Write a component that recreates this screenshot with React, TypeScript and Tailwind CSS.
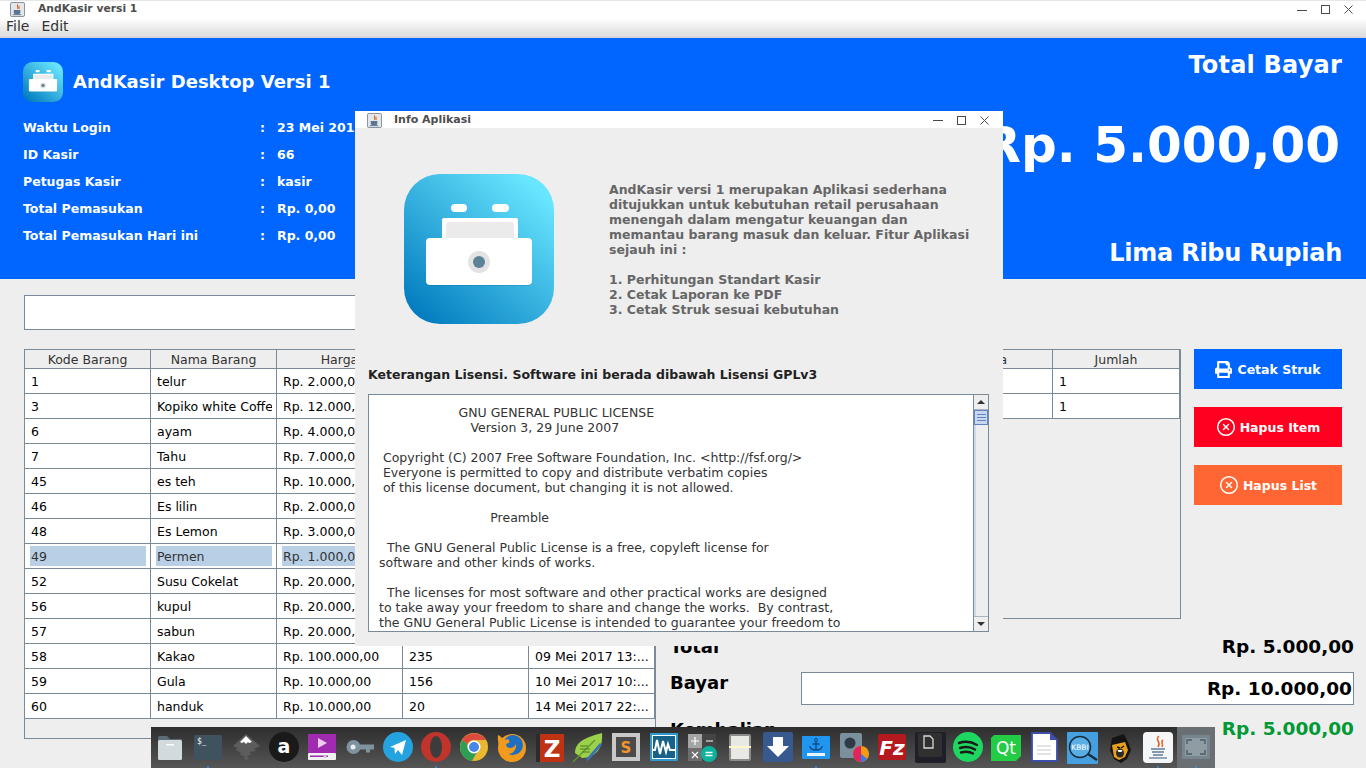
import { CircleX } from "lucide-react";
import { FaPrint } from "react-icons/fa";

const INFO_ROWS = [
  ["Waktu Login", "23 Mei 2017"],
  ["ID Kasir", "66"],
  ["Petugas Kasir", "kasir"],
  ["Total Pemasukan", "Rp. 0,00"],
  ["Total Pemasukan Hari ini", "Rp. 0,00"],
];

const BARANG = [
  ["1", "telur", "Rp. 2.000,00", "", ""],
  ["3", "Kopiko white Coffe", "Rp. 12.000,00", "", ""],
  ["6", "ayam", "Rp. 4.000,00", "", ""],
  ["7", "Tahu", "Rp. 7.000,00", "", ""],
  ["45", "es teh", "Rp. 10.000,00", "", ""],
  ["46", "Es lilin", "Rp. 2.000,00", "", ""],
  ["48", "Es Lemon", "Rp. 3.000,00", "", ""],
  ["49", "Permen", "Rp. 1.000,00", "", ""],
  ["52", "Susu Cokelat", "Rp. 20.000,00", "", ""],
  ["56", "kupul", "Rp. 20.000,00", "", ""],
  ["57", "sabun", "Rp. 20.000,00", "", ""],
  ["58", "Kakao", "Rp. 100.000,00", "235", "09 Mei 2017 13:..."],
  ["59", "Gula", "Rp. 10.000,00", "156", "10 Mei 2017 10:..."],
  ["60", "handuk", "Rp. 10.000,00", "20", "14 Mei 2017 22:..."],
];

const LICENSE = `                    GNU GENERAL PUBLIC LICENSE
                       Version 3, 29 June 2007

 Copyright (C) 2007 Free Software Foundation, Inc. <http://fsf.org/>
 Everyone is permitted to copy and distribute verbatim copies
 of this license document, but changing it is not allowed.

                            Preamble

  The GNU General Public License is a free, copyleft license for
software and other kinds of works.

  The licenses for most software and other practical works are designed
to take away your freedom to share and change the works.  By contrast,
the GNU General Public License is intended to guarantee your freedom to`;

const ABOUT = `AndKasir versi 1 merupakan Aplikasi sederhana
ditujukkan untuk kebutuhan retail perusahaan
menengah dalam mengatur keuangan dan
memantau barang masuk dan keluar. Fitur Aplikasi
sejauh ini :

1. Perhitungan Standart Kasir
2. Cetak Laporan ke PDF
3. Cetak Struk sesuai kebutuhan`;

function AppLogo({ id, className }: { id: string; className: string }) {
  return (
    <svg viewBox="0 0 150 150" className={className}>
      <defs>
        <linearGradient id={id} x1="0.1" y1="1" x2="0.9" y2="0.1">
          <stop offset="0" stopColor="#0079bd" />
          <stop offset="1" stopColor="#69e6ff" />
        </linearGradient>
      </defs>
      <rect width="150" height="150" rx="36" fill={`url(#${id})`} />
      <rect x="47" y="30" width="16" height="8" rx="4" fill="#fff" />
      <rect x="88" y="30" width="17" height="8" rx="4" fill="#fff" />
      <rect x="38" y="44" width="76" height="24" rx="2" fill="#fff" />
      <rect x="42" y="48" width="68" height="18" rx="2" fill="#ebebeb" />
      <rect x="22" y="65" width="106" height="47" rx="4" fill="#0a5c86" opacity="0.25" />
      <rect x="22" y="64" width="106" height="47" rx="4" fill="#fff" />
      <circle cx="75" cy="88" r="11" fill="#e3e3e3" />
      <circle cx="75" cy="88" r="6" fill="#5b8296" />
    </svg>
  );
}

function JavaIcon() {
  return (
    <svg viewBox="0 0 16 16" className="h-[15px] w-[15px]">
      <rect x="0.5" y="0.5" width="15" height="15" rx="1.5" fill="#e4e7ea" stroke="#7d8b99" />
      <path d="M8.5 2.5c-2 2 1 3-.5 5M10 4c-1.500 1.500.5 2-.5 3.500" stroke="#d9642b" strokeWidth="1.100" fill="none" />
      <path d="M4 8.500h7v2.500a2 2 0 0 1-2 2H6a2 2 0 0 1-2-2z" fill="#5a7490" />
      <path d="M3 13.500h9" stroke="#5a7490" />
    </svg>
  );
}

function WindowButtons({ gap }: { gap: string }) {
  return (
    <div className={`flex items-center ${gap}`}>
      <svg viewBox="0 0 10 10" className="h-[10px] w-[10px]">
        <path d="M0 5.500h10" stroke="#4a4a4a" />
      </svg>
      <svg viewBox="0 0 9 9" className="h-[9px] w-[9px]">
        <rect x="0.5" y="0.500" width="8" height="8" fill="none" stroke="#4a4a4a" />
      </svg>
      <svg viewBox="0 0 9 9" className="h-[9px] w-[9px]">
        <path d="M0.500 0.500l8 8M8.500 0.500l-8 8" stroke="#4a4a4a" />
      </svg>
    </div>
  );
}

function Cell({ text, selected }: { text: string; selected?: boolean }) {
  return (
    <div className="h-[25px] border-r border-b border-[#7a8a99] bg-white pt-[2px] pr-[4px] pb-[2px] pl-[5px]">
      <div className={`flex h-full items-center overflow-hidden px-[1px] pt-[2px] whitespace-nowrap ${selected ? "bg-[#b8cfe5] text-[#333333]" : "text-black"}`}>
        {text}
      </div>
    </div>
  );
}

function HeaderCell({ text }: { text: string }) {
  return (
    <div className="flex h-[19px] items-center justify-center overflow-hidden border-r border-b border-[#7a8a99] bg-[#eeeeee] pt-[2px] whitespace-nowrap text-[#333333]">
      {text}
    </div>
  );
}

function SideButton({ color, icon, label }: { color: string; icon: React.ReactNode; label: string }) {
  return (
    <div className={`flex h-10 items-center justify-center gap-[4px] text-[12.5px] font-bold text-white ${color}`}>
      {icon}
      <span className="pt-[2px]">{label}</span>
    </div>
  );
}

const DOCK_ICONS = [
  <g key="folder">
    <path d="M3 6a2 2 0 0 1 2-2h7l3 3h11a1 1 0 0 1 1 1v4H3z" fill="#5a6c78" />
    <rect x="3" y="8" width="24" height="20" rx="1.500" fill="#d3dade" />
    <rect x="11" y="12" width="8" height="1.500" fill="#fff" />
  </g>,
  <g key="terminal">
    <rect x="1" y="3" width="28" height="25" rx="2" fill="#3f525e" />
    <text x="4" y="12" fontSize="8" fill="#fff" fontFamily="DejaVu Sans Mono">$_</text>
  </g>,
  <g key="inkscape">
    <path d="M15 2L29 14l-6 3 2 2-6 1 1 3-4 1 2 3-4 1-1-4-4-1 1-2-5-3 1-2-4-2z" fill="#5c5c5c" />
    <path d="M15 4l6 6-3 1-1-1-2 2-2-2-2 1-2-1z" fill="#fff" />
  </g>,
  <g key="aqemu">
    <circle cx="15" cy="15" r="15" fill="#1a1a1a" />
    <text x="15" y="21" fontSize="19" fontWeight="bold" textAnchor="middle" fill="#fff" fontFamily="DejaVu Sans">a</text>
  </g>,
  <g key="video">
    <rect x="1" y="2" width="28" height="19" fill="#a02bb0" />
    <rect x="1" y="21" width="28" height="7" rx="1" fill="#f1f1f1" />
    <path d="M11 6l9 5-9 5z" fill="#eccdf0" />
    <rect x="3" y="23.500" width="18" height="1.500" fill="#a02bb0" />
    <circle cx="18" cy="24.500" r="1.500" fill="#ccc" />
  </g>,
  <g key="key">
    <circle cx="8.500" cy="15" r="7" fill="#7f929e" />
    <circle cx="8" cy="15" r="2.500" fill="#e8eef1" />
    <path d="M14 12.500h15v5h-4v3h-4v-3h-7z" fill="#7f929e" />
  </g>,
  <g key="telegram">
    <circle cx="15" cy="15" r="15" fill="#25a3e0" />
    <path d="M7 15l16-7-4 15-4-5-3 4-.5-6z" fill="#fff" />
  </g>,
  <g key="opera">
    <circle cx="15" cy="15" r="15" fill="#c0342c" />
    <ellipse cx="15" cy="15" rx="6" ry="11" fill="#3c3c3c" />
  </g>,
  <g key="chrome">
    <circle cx="15" cy="15" r="14" fill="#e8b831" />
    <path d="M3 8a14 14 0 0 1 24 0H15a7 7 0 0 0-6.500 4z" fill="#dd4b3e" />
    <path d="M3 8a14 14 0 0 0 10 21l5-9a7 7 0 0 1-9.500-8z" fill="#2f9e55" />
    <circle cx="15" cy="15" r="6.500" fill="#fff" />
    <circle cx="15" cy="15" r="5" fill="#4a86e8" />
  </g>,
  <g key="firefox">
    <circle cx="15" cy="16" r="14" fill="#f39a1d" />
    <circle cx="16" cy="13" r="10" fill="#1f6fc0" />
    <path d="M1 3c3 1 4 4 7 5 4-2 5 1 4 3-2 0-4 1-2 4 3 2 7 1 9-3 1 5-3 11-9 10C4 21 0 12 1 3z" fill="#f39a1d" />
  </g>,
  <g key="zotero">
    <rect x="1" y="2" width="24" height="28" fill="#2c2c2c" />
    <rect x="5" y="2" width="24" height="28" fill="#bd3314" />
    <text x="17" y="25" fontSize="23" fontWeight="bold" textAnchor="middle" fill="#fff" fontFamily="DejaVu Sans">Z</text>
  </g>,
  <g key="leaf">
    <path d="M2 21C2 9 14 5 29 1c1 12-3 24-20 25z" fill="#9ad04a" />
    <path d="M0 30L22 8" stroke="#5f962a" strokeWidth="1.200" />
    <path d="M7 14h8M7 17h10M9 20h8" stroke="#4d7d22" strokeWidth="1" />
    <path d="M14 26L27 11l2 2-13 15-3 1z" fill="#3f6fb3" />
  </g>,
  <g key="sublime">
    <rect x="1" y="1" width="28" height="28" fill="#c8c8c8" />
    <rect x="5" y="5" width="20" height="20" fill="#4b4b4b" />
    <text x="15" y="21" fontSize="15" fontWeight="bold" textAnchor="middle" fill="#f0962c" fontFamily="DejaVu Sans">S</text>
  </g>,
  <g key="wave">
    <rect x="1" y="1" width="28" height="28" rx="1" fill="#2b9bd0" />
    <rect x="3.500" y="3.500" width="23" height="23" fill="#16628a" />
    <path d="M3 18h3l2-10 3 14 3-13 3 11 2-8 2 6h6" stroke="#fff" strokeWidth="2" fill="none" />
    <rect x="3.500" y="3.500" width="23" height="23" fill="none" stroke="#fff" />
  </g>,
  <g key="calc">
    <rect x="1" y="2" width="14" height="14" fill="#a5a5a5" />
    <rect x="15" y="2" width="14" height="14" fill="#454545" />
    <rect x="1" y="16" width="14" height="13" fill="#6e6e6e" />
    <rect x="15" y="16" width="14" height="13" fill="#454545" />
    <path d="M4 9h8M8 5v8M19 9h7M5 20l6 6M11 20l-6 6" stroke="#fff" strokeWidth="1.200" />
    <circle cx="22" cy="22" r="8" fill="#0db39e" />
    <path d="M18.500 20.500h7M18.500 23.500h7" stroke="#fff" strokeWidth="1.300" />
  </g>,
  <g key="scanner">
    <rect x="4" y="2" width="22" height="27" rx="2" fill="#8c8c8c" />
    <rect x="6" y="4" width="18" height="23" fill="#e8e8e4" />
    <rect x="4" y="14" width="22" height="2" fill="#fdf7c9" />
  </g>,
  <g key="download">
    <rect x="0" y="0" width="30" height="30" rx="2" fill="#38598f" />
    <path d="M10 5h10v9h6L15 25 4 14h6z" fill="#fff" />
  </g>,
  <g key="anchor">
    <rect x="1" y="4" width="28" height="23" rx="1" fill="#2196f0" />
    <rect x="6" y="21" width="18" height="3" fill="#e8f4fd" />
    <circle cx="15" cy="8" r="1.500" fill="none" stroke="#0b4c86" />
    <path d="M15 9.500V18M11.500 12h7M9 14c0 3 3 4 6 4s6-1 6-4" stroke="#0b4c86" strokeWidth="1.400" fill="none" />
  </g>,
  <g key="disks">
    <rect x="1" y="1" width="22" height="25" rx="2" fill="#7a909c" />
    <circle cx="11" cy="11" r="5.500" fill="#2e3b44" />
    <circle cx="22" cy="22" r="8" fill="#f39c12" />
    <path d="M22 22V14a8 8 0 0 0-8 8z" fill="#e0245e" />
    <path d="M22 22h-8a8 8 0 0 0 8 8 8 8 0 0 0 6-3z" fill="#e0245e" />
    <path d="M22 22l6 5a8 8 0 0 1-6 3z" fill="#2f80ed" />
  </g>,
  <g key="filezilla">
    <rect x="1" y="2" width="28" height="26" rx="2" fill="#b3191f" />
    <text x="15" y="23" fontSize="20" fontWeight="bold" fontStyle="italic" textAnchor="middle" fill="#fff" fontFamily="DejaVu Sans">Fz</text>
  </g>,
  <g key="keycap">
    <rect x="0" y="0" width="31" height="31" rx="2" fill="#1f1f29" />
    <rect x="3" y="1" width="24" height="24" rx="2" fill="#303030" />
    <path d="M9 4h6l3 3v9H9z" fill="none" stroke="#d8d8d8" strokeWidth="1.300" />
  </g>,
  <g key="spotify">
    <circle cx="15" cy="15" r="15" fill="#1ed760" />
    <path d="M6 11c6-2 13-1 18 2M7 16c5-1.500 11-1 15 1.500M8 20.500c4-1 9-.7 12 1" stroke="#1a1a1a" strokeWidth="2.400" strokeLinecap="round" fill="none" />
  </g>,
  <g key="qt">
    <path d="M3 3h27v21l-5 5H0V6z" fill="#22cc44" />
    <text x="15" y="22" fontSize="17" textAnchor="middle" fill="#fff" fontFamily="DejaVu Sans">Qt</text>
  </g>,
  <g key="writer">
    <path d="M3 1h18l7 7v21H3z" fill="#fff" stroke="#3d4eab" strokeWidth="1.800" />
    <path d="M21 1v7h7z" fill="#3d4eab" />
    <path d="M8 14h14M8 18h14M8 22h14" stroke="#c8c8c8" strokeWidth="1.200" />
  </g>,
  <g key="kbbi">
    <rect x="0" y="0" width="31" height="32" rx="1" fill="#46a0e0" />
    <circle cx="13" cy="15" r="10.500" fill="#5aaee6" stroke="#182e3e" strokeWidth="1.500" />
    <text x="13" y="18" fontSize="7.500" textAnchor="middle" fill="#fff" fontFamily="DejaVu Sans">KBBI</text>
    <path d="M21 22l9 6" stroke="#182e3e" strokeWidth="2.500" />
  </g>,
  <g key="monkey">
    <path d="M7 6l12-4 4 8 3 8-4 9-6 4-7-4-4-9z" fill="#141414" />
    <path d="M7 13l13-3 3 8-3 7-6 3-5-3z" fill="#e9a11c" />
    <ellipse cx="15" cy="21" rx="4" ry="4.500" fill="#2a2a2a" />
    <path d="M12 15l3 1M19 14l-3 2" stroke="#141414" strokeWidth="1.400" />
    <path d="M12.500 18h5l-1 2h-3z" fill="#fff" />
  </g>,
  <g key="java">
    <rect x="0" y="0" width="30" height="31" rx="4" fill="#f5f6f7" />
    <path d="M16 4c-5 4 3 6-1 11M20 8c-3 2 1 4-1 7" stroke="#e0662a" strokeWidth="1.600" fill="none" />
    <path d="M8 17h14M9 20h12M10 23h10" stroke="#5f7a99" strokeWidth="1.500" />
    <path d="M6 26h18" stroke="#5f7a99" strokeWidth="1.300" />
  </g>,
  <g key="screenshot">
    <rect x="1" y="3" width="28" height="24" rx="1" fill="#76858e" />
    <rect x="4" y="6" width="22" height="18" fill="#8f9ca4" />
    <path d="M6 12V8h5M19 8h5v4M24 18v4h-5M11 22H6v-4" stroke="#5b6b75" strokeWidth="1.800" fill="none" />
  </g>,
];

const DOCK_DOTS = new Set(["terminal", "opera", "anchor", "java", "screenshot"]);

function Dock() {
  return (
    <div className="absolute top-[727px] left-[151px] flex h-[41px] w-[1064px] bg-gradient-to-b from-[#2e2e2e] to-[#565656]">
      {DOCK_ICONS.map((icon) => (
        <div key={icon.key} className={`relative flex h-full w-[38px] justify-center pt-[5px] ${icon.key === "screenshot" ? "bg-[#6a6f73]" : ""}`}>
          <svg viewBox="0 0 30 30" className="h-[30px] w-[30px] overflow-visible">
            {icon}
          </svg>
          {DOCK_DOTS.has(String(icon.key)) && (
            <div className="absolute bottom-0 h-[2px] w-[2px] rounded-full bg-[#3d8fe0]" />
          )}
        </div>
      ))}
    </div>
  );
}

function InfoDialog() {
  return (
    <div className="absolute top-[111px] left-[355px] flex h-[535px] w-[648px] flex-col bg-[#eeeeee]">
      <div className="flex h-[17px] items-center justify-between bg-white pt-[1px] pr-[14px] pl-[12px]">
        <div className="flex items-center gap-[12px] text-[11px] font-bold text-[#4d4d4d]">
          <JavaIcon />
          Info Aplikasi
        </div>
        <WindowButtons gap="gap-[14px]" />
      </div>
      <div className="flex pt-[46px] pl-[49px]">
        <AppLogo id="logo-big" className="h-[150px] w-[150px]" />
        <div className="ml-[55px] pt-[8px] text-[12.5px] leading-[15px] font-bold whitespace-pre text-[#666666]">
          {ABOUT}
        </div>
      </div>
      <div className="mt-[43px] pl-[13px] text-[12.5px] leading-[16px] font-bold text-[#222222]">
        Keterangan Lisensi. Software ini berada dibawah Lisensi GPLv3
      </div>
      <div className="mt-[11px] ml-[13px] flex h-[238px] w-[621px] border border-[#7a8a99] bg-white">
        <div className="flex-1 overflow-hidden pt-[10px] pl-[10px] text-[12.5px] leading-[15px] whitespace-pre text-[#333333]">
          {LICENSE}
        </div>
        <div className="flex w-[15px] flex-col border-l border-[#7a8a99] bg-[#eeeeee]">
          <div className="flex h-[15px] items-center justify-center border-b border-[#a9b5c1]">
            <svg viewBox="0 0 8 4" className="h-[4px] w-[8px]">
              <path d="M4 0l4 4H0z" fill="#333" />
            </svg>
          </div>
          <div className="flex h-[15px] flex-col items-center justify-center gap-[2px] border border-[#6382bf] bg-[#c8d8ee]">
            <div className="h-px w-[9px] bg-[#6382bf]" />
            <div className="h-px w-[9px] bg-[#6382bf]" />
            <div className="h-px w-[9px] bg-[#6382bf]" />
          </div>
          <div className="flex-1 border-l-2 border-[#cddaec]" />
          <div className="flex h-[15px] items-center justify-center border-t border-[#a9b5c1]">
            <svg viewBox="0 0 8 4" className="h-[4px] w-[8px]">
              <path d="M4 4l4-4H0z" fill="#333" />
            </svg>
          </div>
        </div>
      </div>
    </div>
  );
}

export default function App() {
  return (
    <div className="relative h-[768px] w-[1366px] overflow-hidden bg-[#eeeeee] font-['DejaVu_Sans',sans-serif] text-[12.5px]">
      {/* title and menu */}
      <div className="flex h-[18px] items-center justify-between border-t border-[#e6e6e6] bg-white pr-[13px] pl-[10px]">
        <div className="flex items-center gap-[13px] pb-[1px] text-[10.75px] font-bold text-[#4d4d4d]">
          <JavaIcon />
          AndKasir versi 1
        </div>
        <WindowButtons gap="gap-[14px]" />
      </div>
      <div className="flex h-[20px] items-center gap-[12px] border-b border-[#d0d0d0] bg-gradient-to-b from-white to-[#dcdcdc] pb-[2px] pl-[6px] text-[14px] text-[#333333]">
        <span>File</span>
        <span>Edit</span>
      </div>

      {/* blue header */}
      <div className="flex h-[241px] justify-between bg-[#0066ff] pr-[24px] pl-[23px] text-white">
        <div className="pt-[24px]">
          <div className="flex items-center gap-[10px]">
            <AppLogo id="logo-small" className="h-10 w-10" />
            <span className="pb-[2px] text-[18px] font-bold">AndKasir Desktop Versi 1</span>
          </div>
          <div className="mt-[13px] font-bold">
            {INFO_ROWS.map(([label, value]) => (
              <div key={label} className="grid h-[27px] grid-cols-[237px_17px_100px] items-center">
                <span>{label}</span>
                <span>:</span>
                <span className="whitespace-nowrap">{value}</span>
              </div>
            ))}
          </div>
        </div>
        <div className="flex flex-col items-end font-bold">
          <div className="mt-[11px] text-2xl leading-[32px] tracking-[0.2px]">Total Bayar</div>
          <div className="mt-[32px] pr-[2px] text-[50px] leading-[64px]">Rp. 5.000,00</div>
          <div className="mt-[60px] text-2xl leading-[32px] tracking-[-0.25px]">Lima Ribu Rupiah</div>
        </div>
      </div>

      {/* content */}
      <div className="pt-4 pl-[24px]">
        <div className="h-[35px] w-[900px] border border-[#7a8a99] bg-white" />
        <div className="mt-[19px] flex gap-[14px]">
          <div className="h-[390px] w-[632px] border border-[#7a8a99]">
            <div className="grid grid-cols-[126px_126px_126px_126px_126px]">
              {["Kode Barang", "Nama Barang", "Harga", "Stok", "Tanggal"].map((h) => (
                <HeaderCell key={h} text={h} />
              ))}
              {BARANG.map((row) =>
                row.map((text, i) => <Cell key={`${row[0]}-${i}`} text={text} selected={row[0] === "49"} />),
              )}
            </div>
          </div>

          <div className="w-[684px]">
            <div className="flex gap-[13px]">
              <div className="h-[270px] w-[511px] border border-[#7a8a99]">
                <div className="grid grid-cols-[127px_127px_128px_127px]">
                  {["Kode Barang", "Nama Barang", "Harga", "Jumlah"].map((h) => (
                    <HeaderCell key={h} text={h} />
                  ))}
                  {["a", "b"].map((r) =>
                    ["", "", "", "1"].map((text, i) => <Cell key={`${r}-${i}`} text={text} />),
                  )}
                </div>
              </div>
              <div className="flex w-[148px] flex-col gap-[18px]">
                <SideButton color="bg-[#0066ff]" icon={<FaPrint className="mr-[1px] h-[17px] w-[17px]" />} label="Cetak Struk" />
                <SideButton color="bg-[#ff0020]" icon={<CircleX className="h-[20px] w-[20px]" strokeWidth={1.8} />} label="Hapus Item" />
                <SideButton color="bg-[#ff6633]" icon={<CircleX className="h-[20px] w-[20px]" strokeWidth={1.8} />} label="Hapus List" />
              </div>
            </div>
            <div className="mt-[10px] flex flex-col gap-[9px] font-bold text-black">
              <div className="flex h-[34px] items-center justify-between pt-[1px] text-[18px]">
                <span>Total</span>
                <span className="text-[18.5px]">Rp. 5.000,00</span>
              </div>
              <div className="flex h-[33px] justify-between text-[18px]">
                <span className="pt-[1px] leading-[20px]">Bayar</span>
                <div className="flex h-[33px] w-[553px] items-center justify-end border border-[#7a8a99] bg-white pr-[1px] text-[18.5px]">
                  Rp. 10.000,00
                </div>
              </div>
              <div className="-mt-[2px] flex h-[34px] items-center justify-between text-[18px]">
                <span>Kembalian</span>
                <span className="text-[18.5px] text-[#009933]">Rp. 5.000,00</span>
              </div>
            </div>
          </div>
        </div>
      </div>

      <InfoDialog />
      <Dock />
    </div>
  );
}
